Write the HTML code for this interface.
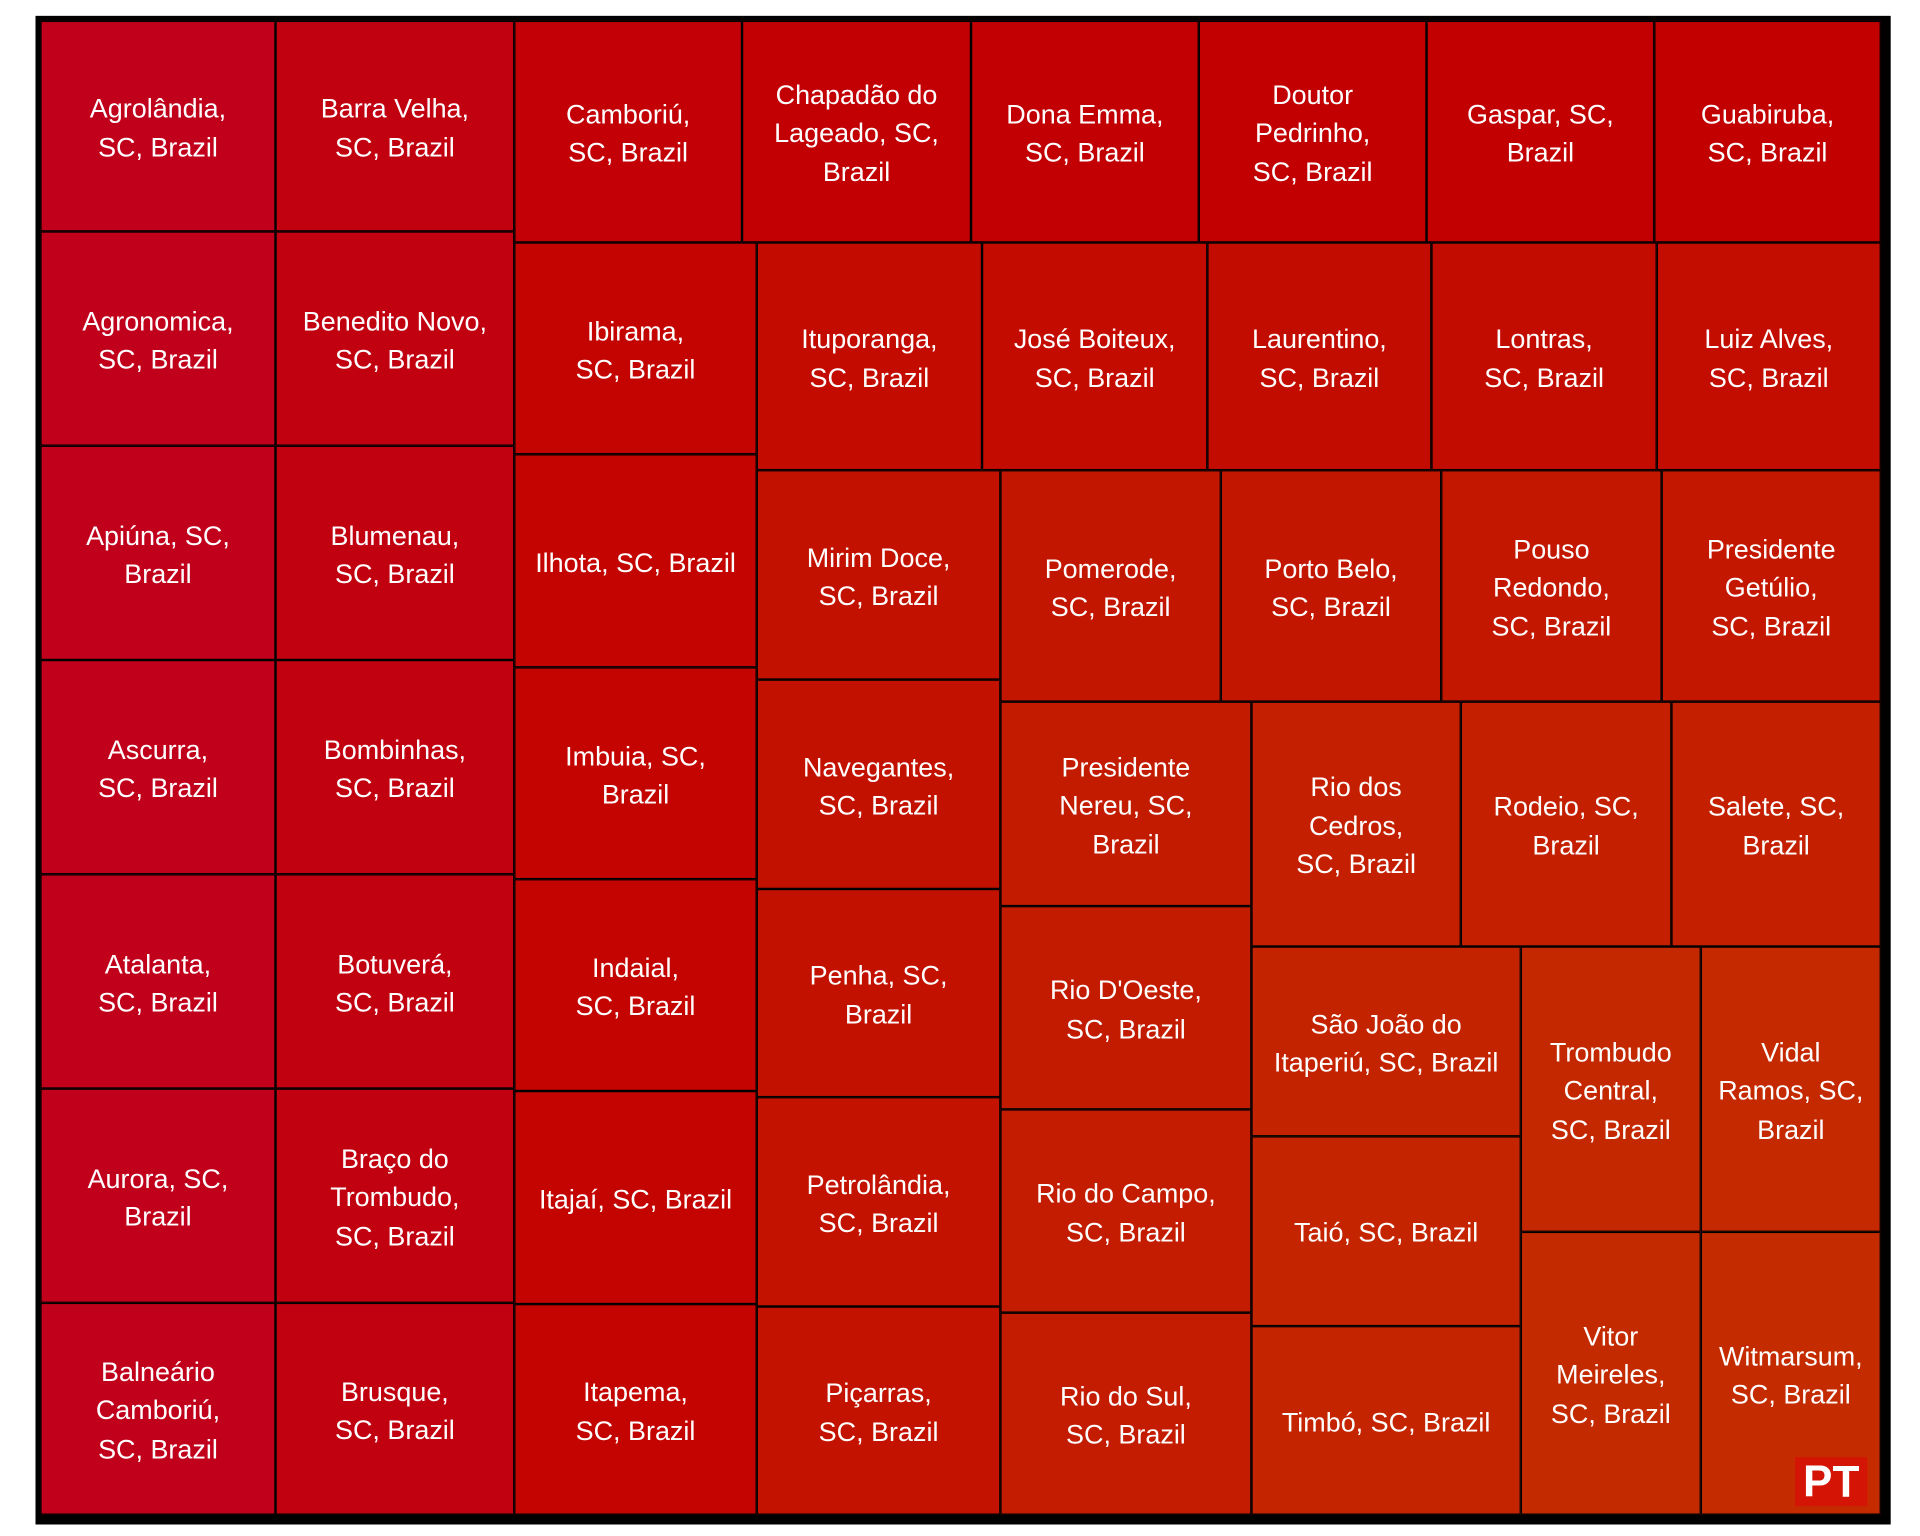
<!DOCTYPE html>
<html><head><meta charset="utf-8"><style>
html,body{margin:0;padding:0;background:#fff;width:1920px;height:1536px;overflow:hidden}
#s{position:absolute;left:0;top:0;width:1568px;height:1254px;transform:scale(1.2244898);transform-origin:0 0}
#o{position:absolute;left:29px;top:13px;width:1507px;height:1224px;border:4px solid #000;background:#000}
.c{position:absolute;box-sizing:border-box;border:0.8px solid #000;padding-top:3px;display:flex;align-items:center;justify-content:center;text-align:center;color:#fff;font-family:"Liberation Sans",sans-serif;font-size:22px;line-height:31.5px}
#pt{position:absolute;left:1466px;top:1190px;width:59px;height:40px;background:#d41505;color:#fff;font:bold 36px/40px "Liberation Sans",sans-serif;text-align:center}
</style></head><body><div id="s"><div id="o"></div>
<div id="g" style="position:absolute;left:0;top:0">
<div class="c" style="left:33px;top:17px;width:192px;height:172px;background:#c1001b">Agrolândia,<br>SC, Brazil</div>
<div class="c" style="left:33px;top:189px;width:192px;height:175px;background:#c1001b">Agronomica,<br>SC, Brazil</div>
<div class="c" style="left:33px;top:364px;width:192px;height:175px;background:#c1001b">Apiúna, SC,<br>Brazil</div>
<div class="c" style="left:33px;top:539px;width:192px;height:175px;background:#c1001b">Ascurra,<br>SC, Brazil</div>
<div class="c" style="left:33px;top:714px;width:192px;height:175px;background:#c1001b">Atalanta,<br>SC, Brazil</div>
<div class="c" style="left:33px;top:889px;width:192px;height:175px;background:#c1001b">Aurora, SC,<br>Brazil</div>
<div class="c" style="left:33px;top:1064px;width:192px;height:173px;background:#c1001b">Balneário<br>Camboriú,<br>SC, Brazil</div>
<div class="c" style="left:225px;top:17px;width:195px;height:172px;background:#c10010">Barra Velha,<br>SC, Brazil</div>
<div class="c" style="left:225px;top:189px;width:195px;height:175px;background:#c10010">Benedito Novo,<br>SC, Brazil</div>
<div class="c" style="left:225px;top:364px;width:195px;height:175px;background:#c10010">Blumenau,<br>SC, Brazil</div>
<div class="c" style="left:225px;top:539px;width:195px;height:175px;background:#c10010">Bombinhas,<br>SC, Brazil</div>
<div class="c" style="left:225px;top:714px;width:195px;height:175px;background:#c10010">Botuverá,<br>SC, Brazil</div>
<div class="c" style="left:225px;top:889px;width:195px;height:175px;background:#c10010">Braço do<br>Trombudo,<br>SC, Brazil</div>
<div class="c" style="left:225px;top:1064px;width:195px;height:173px;background:#c10010">Brusque,<br>SC, Brazil</div>
<div class="c" style="left:420px;top:17px;width:186px;height:181px;background:#c20006">Camboriú,<br>SC, Brazil</div>
<div class="c" style="left:606px;top:17px;width:187px;height:181px;background:#c20004">Chapadão do<br>Lageado, SC,<br>Brazil</div>
<div class="c" style="left:793px;top:17px;width:186px;height:181px;background:#c20003">Dona Emma,<br>SC, Brazil</div>
<div class="c" style="left:979px;top:17px;width:186px;height:181px;background:#c20002">Doutor<br>Pedrinho,<br>SC, Brazil</div>
<div class="c" style="left:1165px;top:17px;width:186px;height:181px;background:#c20001">Gaspar, SC,<br>Brazil</div>
<div class="c" style="left:1351px;top:17px;width:185px;height:181px;background:#c20000">Guabiruba,<br>SC, Brazil</div>
<div class="c" style="left:420px;top:198px;width:198px;height:173px;background:#c30400">Ibirama,<br>SC, Brazil</div>
<div class="c" style="left:420px;top:371px;width:198px;height:174px;background:#c30400">Ilhota, SC, Brazil</div>
<div class="c" style="left:420px;top:545px;width:198px;height:173px;background:#c30400">Imbuia, SC,<br>Brazil</div>
<div class="c" style="left:420px;top:718px;width:198px;height:173px;background:#c30400">Indaial,<br>SC, Brazil</div>
<div class="c" style="left:420px;top:891px;width:198px;height:174px;background:#c30400">Itajaí, SC, Brazil</div>
<div class="c" style="left:420px;top:1065px;width:198px;height:172px;background:#c30400">Itapema,<br>SC, Brazil</div>
<div class="c" style="left:618px;top:198px;width:184px;height:186px;background:#c30b00">Ituporanga,<br>SC, Brazil</div>
<div class="c" style="left:802px;top:198px;width:184px;height:186px;background:#c30b00">José Boiteux,<br>SC, Brazil</div>
<div class="c" style="left:986px;top:198px;width:183px;height:186px;background:#c30c00">Laurentino,<br>SC, Brazil</div>
<div class="c" style="left:1169px;top:198px;width:184px;height:186px;background:#c30c00">Lontras,<br>SC, Brazil</div>
<div class="c" style="left:1353px;top:198px;width:183px;height:186px;background:#c30d00">Luiz Alves,<br>SC, Brazil</div>
<div class="c" style="left:618px;top:384px;width:199px;height:171px;background:#c31100">Mirim Doce,<br>SC, Brazil</div>
<div class="c" style="left:618px;top:555px;width:199px;height:171px;background:#c31100">Navegantes,<br>SC, Brazil</div>
<div class="c" style="left:618px;top:726px;width:199px;height:170px;background:#c31100">Penha, SC,<br>Brazil</div>
<div class="c" style="left:618px;top:896px;width:199px;height:171px;background:#c31200">Petrolândia,<br>SC, Brazil</div>
<div class="c" style="left:618px;top:1067px;width:199px;height:170px;background:#c31200">Piçarras,<br>SC, Brazil</div>
<div class="c" style="left:817px;top:384px;width:180px;height:189px;background:#c31600">Pomerode,<br>SC, Brazil</div>
<div class="c" style="left:997px;top:384px;width:180px;height:189px;background:#c31600">Porto Belo,<br>SC, Brazil</div>
<div class="c" style="left:1177px;top:384px;width:180px;height:189px;background:#c31700">Pouso<br>Redondo,<br>SC, Brazil</div>
<div class="c" style="left:1357px;top:384px;width:179px;height:189px;background:#c31700">Presidente<br>Getúlio,<br>SC, Brazil</div>
<div class="c" style="left:817px;top:573px;width:205px;height:167px;background:#c31b00">Presidente<br>Nereu, SC,<br>Brazil</div>
<div class="c" style="left:817px;top:740px;width:205px;height:166px;background:#c31b00">Rio D'Oeste,<br>SC, Brazil</div>
<div class="c" style="left:817px;top:906px;width:205px;height:166px;background:#c31c00">Rio do Campo,<br>SC, Brazil</div>
<div class="c" style="left:817px;top:1072px;width:205px;height:165px;background:#c31c00">Rio do Sul,<br>SC, Brazil</div>
<div class="c" style="left:1022px;top:573px;width:171px;height:200px;background:#c41f00">Rio dos<br>Cedros,<br>SC, Brazil</div>
<div class="c" style="left:1193px;top:573px;width:172px;height:200px;background:#c42000">Rodeio, SC,<br>Brazil</div>
<div class="c" style="left:1365px;top:573px;width:171px;height:200px;background:#c42000">Salete, SC,<br>Brazil</div>
<div class="c" style="left:1022px;top:773px;width:220px;height:155px;background:#c42300">São João do<br>Itaperiú, SC, Brazil</div>
<div class="c" style="left:1022px;top:928px;width:220px;height:155px;background:#c42400">Taió, SC, Brazil</div>
<div class="c" style="left:1022px;top:1083px;width:220px;height:154px;background:#c42400">Timbó, SC, Brazil</div>
<div class="c" style="left:1242px;top:773px;width:147px;height:233px;background:#c42800">Trombudo<br>Central,<br>SC, Brazil</div>
<div class="c" style="left:1389px;top:773px;width:147px;height:233px;background:#c42900">Vidal<br>Ramos, SC,<br>Brazil</div>
<div class="c" style="left:1242px;top:1006px;width:147px;height:231px;background:#c42a00">Vitor<br>Meireles,<br>SC, Brazil</div>
<div class="c" style="left:1389px;top:1006px;width:147px;height:231px;background:#c42c00">Witmarsum,<br>SC, Brazil</div>
</div>
<div id="pt">PT</div>
</div></body></html>
